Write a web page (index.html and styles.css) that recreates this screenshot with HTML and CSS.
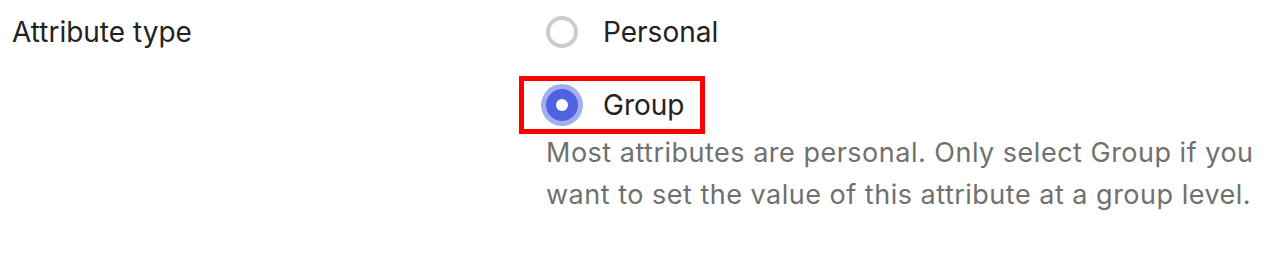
FILE: index.html
```html
<!DOCTYPE html>
<html lang="en">
<head>
    <meta charset="UTF-8">
    <title>Attribute type</title>
    <link rel="stylesheet" href="styles.css">
</head>
<body>
    <div class="field-row">
        <div class="field-label">Attribute type</div>
        <div class="field-control">
            <label class="radio-option">
                <input type="radio" name="attrType" value="personal">
                <span class="radio-mark"></span>
                <span class="radio-text">Personal</span>
            </label>
            <label class="radio-option highlighted">
                <input type="radio" name="attrType" value="group" checked>
                <span class="radio-mark"></span>
                <span class="radio-text">Group</span>
            </label>
            <p class="help-text">Most attributes are personal. Only select Group if you want to set the value of this attribute at a group level.</p>
        </div>
    </div>
</body>
</html>
```

FILE: styles.css
```css
* {
    margin: 0;
    padding: 0;
    box-sizing: border-box;
    font-family: Inter, 'Noto Sans', sans-serif;
}

body {
    background-color: #ffffff;
    color: #222222;
}

.field-row {
    display: flex;
    padding-top: 12px;
}

.field-label {
    width: 546px;
    padding-left: 12px;
    font-size: 28px;
    line-height: 40px;
}

.field-control {
    width: 720px;
    display: flex;
    flex-direction: column;
    align-items: flex-start;
}

.radio-option {
    display: flex;
    align-items: center;
    gap: 25px;
    font-size: 28px;
    line-height: 40px;
    cursor: pointer;
}

.radio-option + .radio-option {
    margin-top: 29px;
}

.radio-option input {
    display: none;
}

.radio-mark {
    width: 32px;
    height: 32px;
    border: 4px solid #cccccc;
    border-radius: 50%;
    display: flex;
    align-items: center;
    justify-content: center;
}

.radio-option input:checked + .radio-mark {
    border: none;
    background-color: #4f63e0;
    box-shadow: 0 0 0 5px #a3aef0;
}

.radio-option input:checked + .radio-mark::after {
    content: "";
    width: 12px;
    height: 12px;
    border-radius: 50%;
    background-color: #ffffff;
}

.highlighted {
    outline: 5px solid #ff0000;
    padding: 4px 16px 4px 22px;
    margin-left: -22px;
}

.help-text {
    margin-top: 3px;
    font-size: 27px;
    line-height: 42px;
    color: #707070;
    letter-spacing: 0.5px;
}
```
